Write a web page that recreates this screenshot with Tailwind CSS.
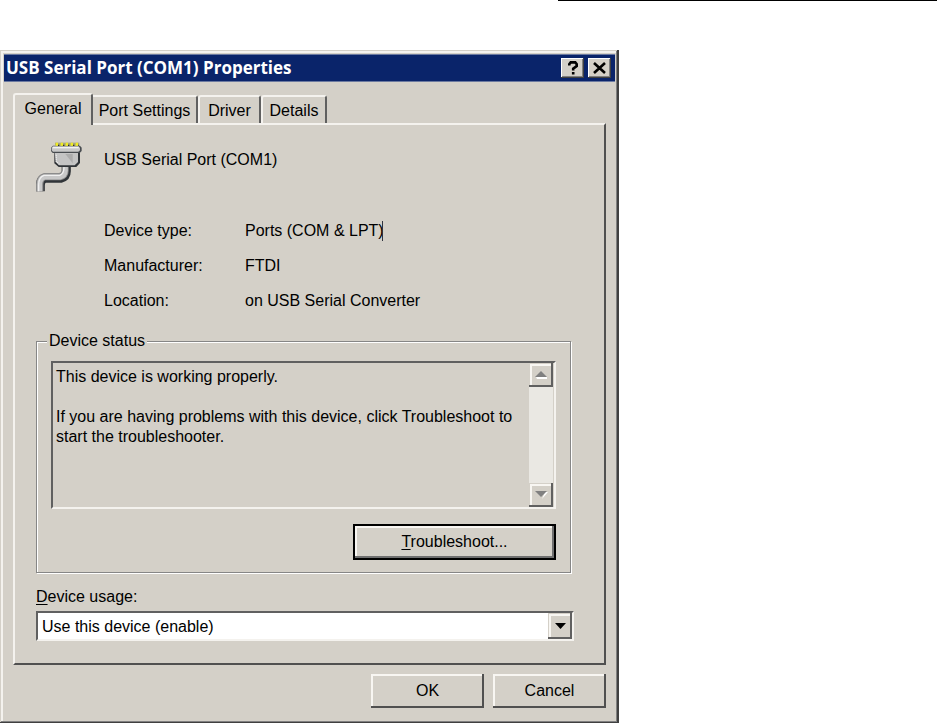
<!DOCTYPE html>
<html lang="en">
<head>
    <meta charset="UTF-8">
    <meta name="viewport" content="width=device-width, initial-scale=1.0">
    <title>USB Serial Port (COM1) Properties</title>
    <script src="https://cdn.jsdelivr.net/npm/@tailwindcss/browser@4"></script>
</head>
<body class="bg-white text-black text-base leading-5 font-['Liberation_Sans',Arial,sans-serif]">
    <header class="flex justify-end h-[50px]">
        <div class="w-[379px] border-t border-black"></div>
    </header>

    <main class="w-full max-w-[619px] bg-[#d4d0c8] p-1 shadow-[inset_-2px_-2px_#404040,inset_1px_1px_#d4d0c8,inset_-3px_-3px_#808080,inset_3px_3px_#f4f2ee]">
        <!-- Title bar -->
        <div class="flex items-center h-7 bg-[#0a246a] border-y border-[#6c7aa0] pl-0.5 pr-1">
            <h1 class="flex-1 text-white text-[17px] leading-5 font-bold font-['Open_Sans',sans-serif]">USB Serial Port (COM1) Properties</h1>
            <div class="flex gap-1">
                <button type="button" aria-label="Help" class="flex items-center justify-center w-[23px] h-5 bg-[#d4d0c8] shadow-[inset_-1px_-1px_#404040,inset_1px_1px_#fff,inset_-2px_-2px_#808080]">
                    <svg width="10" height="14" viewBox="0 0 10 14" fill="none" stroke="#000" stroke-width="2.6"><path d="M1.3 4.5V3.2L2.7 1.4H7.3L8.7 3.2V5L5.2 7.6V9.6M5.2 11V13.6"/></svg>
                </button>
                <button type="button" aria-label="Close" class="flex items-center justify-center w-[23px] h-5 bg-[#d4d0c8] shadow-[inset_-1px_-1px_#404040,inset_1px_1px_#fff,inset_-2px_-2px_#808080]">
                    <svg width="13" height="12" viewBox="0 0 13 12" stroke="#000" stroke-width="2.6"><path d="M1 1L12 11M12 1L1 11"/></svg>
                </button>
            </div>
        </div>

        <div class="px-[9px] pt-[11px] pb-3">
            <!-- Tabs -->
            <div class="relative z-10 flex items-end -mb-0.5" role="tablist">
                <button type="button" role="tab" aria-selected="true" class="w-20 h-8 pb-0.5 bg-[#d4d0c8] rounded-t-[3px] border-t-2 border-l-2 border-[#f4f2ee] border-r-2 border-r-[#606060]">General</button>
                <button type="button" role="tab" class="w-[105px] h-7 mb-0.5 pt-0.5 border-t-2 border-[#f4f2ee] border-r-2 border-r-[#606060] rounded-tr-[3px]">Port Settings</button>
                <button type="button" role="tab" class="w-[63px] h-7 mb-0.5 pt-0.5 border-t-2 border-l-2 border-[#f4f2ee] border-r-2 border-r-[#606060] rounded-t-[3px]">Driver</button>
                <button type="button" role="tab" class="w-[66px] h-7 mb-0.5 pt-0.5 border-t-2 border-l-2 border-[#f4f2ee] border-r-2 border-r-[#606060] rounded-t-[3px]">Details</button>
            </div>

            <!-- General page -->
            <section class="border-2 border-[#f4f2ee] border-r-[#505050] border-b-[#505050] pt-[17px] pb-[22px] pl-[21px] pr-[30px]">
                <div class="flex">
                    <svg class="shrink-0 mr-5" width="48" height="51" viewBox="48 36 144 153" fill="none">
                        <path d="M139 108V124Q139 141 122 145H75Q61 148 61 165V184" stroke="#303438" stroke-width="27"/>
                        <path d="M135 108V122Q135 136 120 140H73Q59 144 59 164V184" stroke="#8c8c8c" stroke-width="22"/>
                        <path d="M136 108V122Q135 138 120 141H73Q59 145 59 164V184" stroke="#c8c8c8" stroke-width="15"/>
                        <path d="M132 112Q132 132 119 136H72Q56 141 56 165V184" stroke="#f0f0f0" stroke-width="4"/>
                        <path d="M103 65H180V99L169 111H116L103 100Z" fill="#303438"/>
                        <path d="M104 65H174V96L164 106H118L107 96Z" fill="#c4c4c4"/>
                        <path d="M136 72H158V100Z" fill="#acacac"/>
                        <path d="M109 74V95L118 103" stroke="#eee" stroke-width="4" stroke-dasharray="3 3"/>
                        <path d="M99 47H180L185 53V63L179 69H98L93 63V53Z" fill="#484c50"/>
                        <path d="M99 49H176L180 54V61L175 65H99L95 61V54Z" fill="#c8c8c8"/>
                        <path d="M98 53H176" stroke="#f2f2f2" stroke-width="4"/>
                        <path d="M105 43H178" stroke="#a8a678" stroke-width="10"/>
                        <path d="M107 43H176" stroke="#f0ec20" stroke-width="9" stroke-dasharray="7 8"/>
                        <path d="M114 46H176" stroke="#303020" stroke-width="4" stroke-dasharray="4 11"/>
                    </svg>
                    <h2 class="pt-2">USB Serial Port (COM1)</h2>
                </div>
                <dl class="grid grid-cols-[141px_1fr] leading-[35px] mt-5 ml-[68px]">
                    <dt>Device type:</dt>
                    <dd class="flex items-center">Ports (COM &amp; LPT)<span class="w-px h-5 -ml-0.5 bg-[#303440]"></span></dd>
                    <dt>Manufacturer:</dt>
                    <dd>FTDI</dd>
                    <dt>Location:</dt>
                    <dd>on USB Serial Converter</dd>
                </dl>

                <fieldset class="mt-[13px] mr-[3px] border border-[#868686] shadow-[inset_1px_1px_#fff,1px_1px_#fff] px-[14px] pt-[10px] pb-3">
                    <legend class="bg-[#d4d0c8] px-0.5 -ml-1">Device status</legend>
                    <div class="flex h-[148px] border-2 border-[#606060] border-r-[#f4f2ee] border-b-[#f4f2ee]">
                        <textarea readonly aria-label="Device status" class="flex-1 min-w-0 resize-none overflow-hidden outline-none pl-[3px] pt-1 leading-5">This device is working properly.

If you are having problems with this device, click Troubleshoot to start the troubleshooter.</textarea>
                        <div class="flex flex-col justify-between w-6 mr-px bg-[#eae8e3]">
                            <button type="button" aria-label="Scroll up" class="flex items-center justify-center h-6 bg-[#d4d0c8] shadow-[inset_-2px_-2px_#606060,inset_1px_1px_#d4d0c8,inset_3px_3px_#f8f6f2]">
                                <svg width="13" height="8" viewBox="0 0 13 8"><path d="M1 6H12V8H2Z" fill="#fff"/><path d="M6 0L12 6H0Z" fill="#808080"/></svg>
                            </button>
                            <button type="button" aria-label="Scroll down" class="flex items-center justify-center h-6 bg-[#d4d0c8] shadow-[inset_-2px_-2px_#606060,inset_1px_1px_#d4d0c8,inset_3px_3px_#f8f6f2]">
                                <svg width="13" height="8" viewBox="0 0 13 8"><path d="M7 8L13 1H10Z" fill="#fff"/><path d="M0 0H12L6 6Z" fill="#808080"/></svg>
                            </button>
                        </div>
                    </div>
                    <div class="flex justify-end mt-[15px]">
                        <button type="button" class="w-[203px] h-9 border-2 border-black shadow-[inset_-2px_-2px_#707070,inset_2px_2px_#f8f6f2]"><span class="underline underline-offset-2">T</span>roubleshoot...</button>
                    </div>
                </fieldset>

                <label for="usage" class="block mt-[14px]"><span class="underline underline-offset-2">D</span>evice usage:</label>
                <div class="relative mt-1">
                    <select id="usage" class="block w-full h-[30px] appearance-none bg-white border-2 border-[#606060] border-r-[#f4f2ee] border-b-[#f4f2ee] pl-1 pt-0.5 outline-none">
                        <option>Use this device (enable)</option>
                    </select>
                    <span class="absolute right-0.5 top-0.5 flex items-center justify-center w-6 h-[26px] bg-[#d4d0c8] pointer-events-none shadow-[inset_-2px_-2px_#606060,inset_1px_1px_#d4d0c8,inset_3px_3px_#f8f6f2]">
                        <svg width="11" height="6" viewBox="0 0 11 6"><path d="M0 0H11L5.5 6Z"/></svg>
                    </span>
                </div>
            </section>

            <div class="flex justify-end gap-[9px] mt-[9px]">
                <button type="button" class="w-[113px] h-[34px] shadow-[inset_-2px_-2px_#505050,inset_2px_2px_#f8f6f2]">OK</button>
                <button type="button" class="w-[113px] h-[34px] shadow-[inset_-2px_-2px_#505050,inset_2px_2px_#f8f6f2]">Cancel</button>
            </div>
        </div>
    </main>
</body>
</html>
